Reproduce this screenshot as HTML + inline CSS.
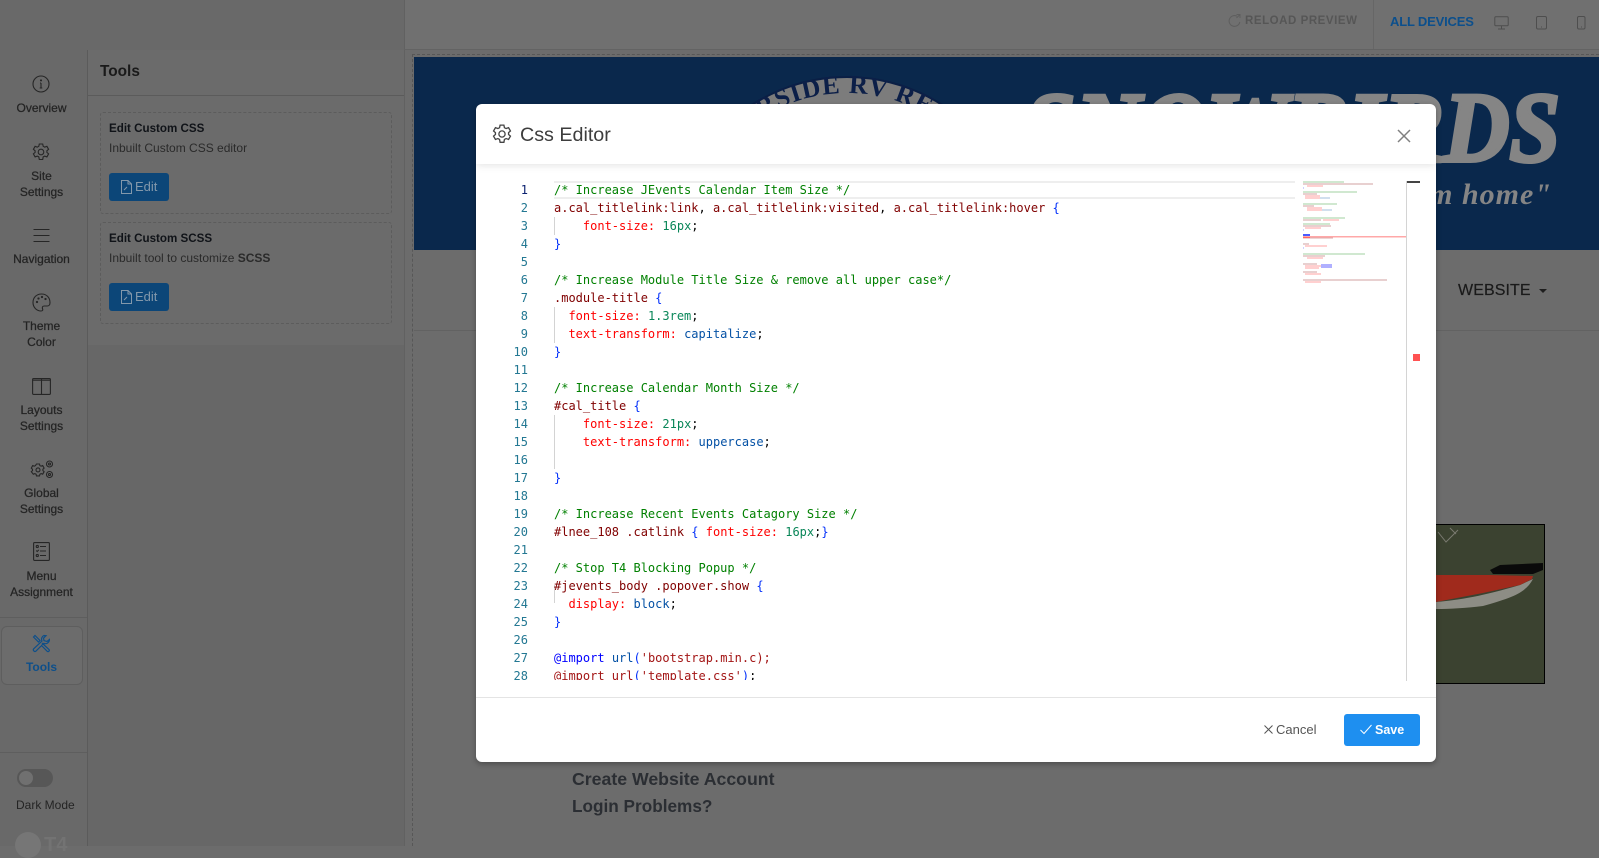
<!DOCTYPE html>
<html><head><meta charset="utf-8">
<style>
*{box-sizing:border-box}
html,body{margin:0;padding:0;width:1599px;height:846px;overflow:hidden;background:#6c6c6c;font-family:"Liberation Sans",sans-serif}
.a{position:absolute}
.nav{position:absolute;left:0;width:83px;text-align:center;font-size:12px;line-height:15.5px;color:#242424;-webkit-text-stroke:.25px #242424}
.ic{position:absolute;fill:none;stroke:#262626;stroke-width:1.1}
.card{position:absolute;left:100px;width:292px;height:102px;border:1px dashed #5c5c5c;border-radius:3px}
.card b.t{position:absolute;left:8px;top:8px;font-size:11.6px;line-height:16px;color:#101318}
.card span.s{position:absolute;left:8px;top:27px;font-size:12px;line-height:16px;color:#2a2a2a;white-space:nowrap}
.btn{position:absolute;left:8px;top:60px;width:60px;height:28px;background:#0c4678;border-radius:3px;color:#8398ab;font-size:13px;line-height:28px;padding-left:26px}
.btn svg{position:absolute;left:12px;top:7px;fill:none;stroke:#8398ab;stroke-width:1}
#code,#nums{position:absolute;font:12px/18px "DejaVu Sans Mono","Liberation Mono",monospace;white-space:pre;margin:0}
#nums{width:38px;text-align:right;color:#237893}
#code{color:#000}
.c{color:#008000}.s{color:#800000}.p{color:#f00}.n{color:#098658}.v{color:#0451a5}.b{color:#0431fa}.q{color:#a31515}.k{color:#00f}
.g{position:absolute;left:554px;width:1px;background:#d3d3d3}
</style></head><body>

<!-- top bar + structure -->
<div class="a" style="left:0;top:0;width:1599px;height:50px;background:#707070"></div>
<div class="a" style="left:0;top:0;width:404px;height:50px;background:#696969"></div>
<div class="a" style="left:0;top:50px;width:88px;height:796px;background:#696969"></div>
<div class="a" style="left:88px;top:50px;width:316px;height:295px;background:#6b6b6b"></div>
<div class="a" style="left:88px;top:345px;width:316px;height:501px;background:#676767"></div>
<div class="a" style="left:404px;top:50px;width:1195px;height:796px;background:#6c6c6c"></div>
<div class="a" style="left:87px;top:50px;width:1px;height:796px;background:#5b5b5b"></div>
<div class="a" style="left:404px;top:0;width:1px;height:846px;background:#616161"></div>
<div class="a" style="left:404px;top:49px;width:1195px;height:1px;background:#636363"></div>
<div class="a" style="left:1373px;top:0;width:1px;height:49px;background:#666"></div>
<div class="a" style="left:412px;top:54px;width:1187px;height:1px;border-top:1px dashed #575757"></div>
<div class="a" style="left:412px;top:54px;width:1px;height:792px;border-left:1px dashed #575757"></div>

<!-- sidebar -->
<svg class="ic" style="left:32px;top:75px" width="18" height="18" viewBox="0 0 18 18"><circle cx="9" cy="9" r="8"/><path d="M9 8v5M7.700 13h2.600M8 8h1" /><circle cx="9" cy="5.400" r=".5"/></svg>
<div class="nav" style="top:101px">Overview</div>
<svg class="ic" style="left:32px;top:143px" width="18" height="18" viewBox="0 0 18 18"><path d="M7.300 1h3.400l.5 2.300 1.500.8 2.200-.8 1.700 3-1.700 1.500v1.600l1.700 1.500-1.700 3-2.200-.8-1.500.8-.5 2.600H7.300l-.5-2.600-1.500-.8-2.200.8-1.700-3 1.700-1.500V7.800L1.400 6.300l1.700-3 2.200.8 1.500-.8z"/><circle cx="9" cy="9" r="2.800"/></svg>
<div class="nav" style="top:169px">Site<br>Settings</div>
<svg class="ic" style="left:33px;top:228px" width="17" height="15" viewBox="0 0 17 15"><path d="M.5 1.500h16M.5 7.500h16M.5 13.500h16"/></svg>
<div class="nav" style="top:252px">Navigation</div>
<svg class="ic" style="left:32px;top:293px" width="19" height="19" viewBox="0 0 19 19"><path d="M9.500 1C4.500 1 1 4.600 1 9.500 1 14.400 4.800 18 9 18c1.600 0 2-1 1.600-2-.6-1.500-.3-3 1.600-3h3c1.600 0 2.800-1.200 2.800-3.300C18 4.500 14.500 1 9.500 1z"/><circle cx="5" cy="9" r=".6"/><circle cx="6.500" cy="5.500" r=".6"/><circle cx="10" cy="4" r=".6"/><circle cx="13.500" cy="6" r=".6"/></svg>
<div class="nav" style="top:319px">Theme<br>Color</div>
<svg class="ic" style="left:32px;top:378px" width="19" height="17" viewBox="0 0 19 17"><rect x=".6" y=".6" width="17.800" height="15.800" rx="1"/><path d="M9.500.6v15.800M.6 2.200h17.800"/></svg>
<div class="nav" style="top:403px">Layouts<br>Settings</div>
<svg class="ic" style="left:30px;top:460px" width="24" height="19" viewBox="0 0 24 19"><path d="M6.500 4h3l.4 1.600 1.200.6 1.600-.6 1.400 2.500-1.200 1.100v1.400l1.200 1.100-1.400 2.500-1.600-.6-1.200.6-.4 1.700h-3l-.4-1.700-1.200-.6-1.600.6L1.300 11.700l1.200-1.100V9.200L1.300 8.100l1.400-2.500 1.600.6 1.200-.6z"/><circle cx="8" cy="9.900" r="2"/><circle cx="19.500" cy="4" r="3"/><circle cx="19.500" cy="4" r="1"/><circle cx="19.500" cy="14.500" r="3"/><circle cx="19.500" cy="14.500" r="1"/></svg>
<div class="nav" style="top:486px">Global<br>Settings</div>
<svg class="ic" style="left:33px;top:542px" width="17" height="19" viewBox="0 0 17 19"><rect x=".6" y=".6" width="15.800" height="17.800" rx="1"/><circle cx="4.300" cy="4.500" r="1.100"/><path d="M7 4.500h6M3.200 8.500l1 1 1.600-1.600M7 9h6M7 13.500h6"/><circle cx="4.300" cy="13.500" r="1.100"/></svg>
<div class="nav" style="top:569px">Menu<br>Assignment</div>
<div class="a" style="left:0;top:617px;width:87px;height:1px;background:#5e5e5e"></div>
<div class="a" style="left:1px;top:626px;width:82px;height:59px;border:1px solid #5e5e5e;border-radius:6px;background:#6c6c6c"></div>
<svg class="ic" style="left:32px;top:634px;stroke:#0e4f8a;stroke-width:1.200" width="19" height="19" viewBox="0 0 19 19"><path d="M1.500 3L3 1.500l5 5-1.500 1.500zM10 9l7 6.500c1 1.200-.6 2.800-1.800 1.800L9 11M12 1.500a4 4 0 0 0-2 5.500L1.700 14.800c-1.200 1.500.8 3.500 2.300 2.300L11.800 9.300a4 4 0 0 0 5.600-3.800L15 7.500l-3-.8-.5-2.500 2.500-2.500z"/></svg>
<div class="nav" style="top:660px;color:#0e4f8a;font-weight:bold;-webkit-text-stroke:0">Tools</div>
<div class="a" style="left:0;top:752px;width:87px;height:1px;background:#5e5e5e"></div>
<div class="a" style="left:17px;top:769px;width:36px;height:18px;border-radius:9px;background:#575757"></div>
<div class="a" style="left:19px;top:771px;width:14px;height:14px;border-radius:7px;background:#707070"></div>
<div class="a" style="left:16px;top:797px;font-size:12px;line-height:16px;color:#242424">Dark Mode</div>
<div class="a" style="left:15px;top:832px;width:26px;height:26px;border-radius:13px;background:#767676"></div>
<div class="a" style="left:44px;top:835px;font-size:20px;line-height:20px;font-weight:bold;color:#737373">T4</div>

<!-- tools panel -->
<div class="a" style="left:100px;top:62px;font-size:15.400px;line-height:19px;font-weight:bold;color:#1a1a1a">Tools</div>
<div class="a" style="left:88px;top:95px;width:316px;height:1px;background:#5b5b5b"></div>
<div class="card" style="top:112px"><b class="t">Edit Custom CSS</b><span class="s">Inbuilt Custom CSS editor</span><div class="btn"><svg width="11" height="14" viewBox="0 0 11 14"><path d="M.5.500h6.500l3.500 3.500v9.500H.5zM7 .5V4h3.500M3 10l3-3"/></svg>Edit</div></div>
<div class="card" style="top:222px"><b class="t">Edit Custom SCSS</b><span class="s">Inbuilt tool to customize <b>SCSS</b></span><div class="btn"><svg width="11" height="14" viewBox="0 0 11 14"><path d="M.5.500h6.500l3.500 3.500v9.500H.5zM7 .5V4h3.500M3 10l3-3"/></svg>Edit</div></div>

<!-- top right -->
<svg class="a" style="left:1228px;top:14px;fill:none;stroke:#5e5e5e;stroke-width:1" width="13" height="13" viewBox="0 0 13 13"><path d="M9 2.200A5.400 5.400 0 1 0 11.800 8M8.500.5h3.500V4M12 .5L8.500 4"/></svg>
<div class="a" style="left:1245px;top:14px;font-size:11.500px;line-height:15px;font-weight:bold;letter-spacing:.55px;color:#565656;white-space:nowrap">RELOAD PREVIEW</div>
<div class="a" style="left:1390px;top:14px;font-size:13px;line-height:16px;font-weight:bold;color:#0c4f8c;white-space:nowrap;letter-spacing:-.18px">ALL DEVICES</div>
<svg class="a" style="left:1494px;top:16px;fill:none;stroke:#4e4e4e;stroke-width:1" width="15" height="14" viewBox="0 0 15 14"><rect x=".8" y=".8" width="13.400" height="9" rx="1"/><path d="M7.500 10v3M4 13h7"/></svg>
<svg class="a" style="left:1536px;top:16px;fill:none;stroke:#4e4e4e;stroke-width:1" width="11" height="14" viewBox="0 0 11 14"><rect x=".5" y=".5" width="10" height="12.500" rx="1.500"/><path d="M5 11h1"/></svg>
<svg class="a" style="left:1577px;top:16px;fill:none;stroke:#4e4e4e;stroke-width:1" width="9" height="14" viewBox="0 0 9 14"><rect x=".5" y=".5" width="7.500" height="12.500" rx="1.500"/><path d="M4 11h1"/></svg>

<!-- banner -->
<div class="a" style="left:414px;top:57px;width:1185px;height:193px;background:#0a284c;overflow:hidden">
 <svg class="a" style="left:0;top:0" width="1185" height="193" viewBox="0 0 1185 193">
  <circle cx="433" cy="196" r="176" fill="#7c7c7c" stroke="#0a1f45" stroke-width="2"/>
  <path id="arc" d="M273 196 A160 160 0 0 1 593 196" fill="none"/>
  <text font-family="'Liberation Serif',serif" font-weight="bold" font-size="26" fill="#0c1f48" letter-spacing="1" text-anchor="middle"><textPath href="#arc" startOffset="50%">RIVERSIDE RV RESORT</textPath></text>
  <text x="611" y="104" textLength="535" lengthAdjust="spacingAndGlyphs" font-family="'Liberation Serif',serif" font-style="italic" font-weight="bold" font-size="100" fill="#858585" stroke="#858585" stroke-width="4">SNOWBIRDS</text>
  <text x="1138" y="147" text-anchor="end" font-family="'Liberation Serif',serif" font-style="italic" font-weight="bold" font-size="30" fill="#858585" letter-spacing="1">from home"</text>
 </svg>
</div>
<div class="a" style="left:1458px;top:281px;font-size:16px;line-height:19px;color:#1a1a1a;letter-spacing:.1px;-webkit-text-stroke:.2px #1a1a1a">WEBSITE</div>
<div class="a" style="left:1539px;top:289px;width:0;height:0;border:4px solid transparent;border-top-color:#1e1e1e;border-bottom:0"></div>
<div class="a" style="left:414px;top:330px;width:1185px;height:1px;background:#626262"></div>

<!-- kayak image -->
<svg class="a" style="left:1400px;top:524px" width="146" height="161" viewBox="0 0 146 161">
 <rect x=".5" y=".5" width="144" height="159" fill="#3b4230" stroke="#000"/>
 <path d="M36 78 C60 76 83 72 120 61 L133 55 C125 70 110 74 83 82 C66 84 50 85 36 85z" fill="#8d8d85"/>
 <path d="M36 51 L90 51 L133 52 L132 55 L120 61 L83 69 L36 78z" fill="#a02a1c"/>
 <path d="M90 46 L100 41 L143 39 L143 46 L133 50 L93 50z" fill="#0a0a0a"/>
 <path d="M38 8l8 10 12-12M50 4l6 6" stroke="#7a7a70" stroke-width="1" fill="none"/>
</svg>

<div class="a" style="left:572px;top:767px;font-size:17.700px;line-height:24px;font-weight:bold;color:#2b2e33;white-space:nowrap">Create Website Account</div>
<div class="a" style="left:572px;top:794px;font-size:17.200px;line-height:24px;font-weight:bold;color:#2b2e33;white-space:nowrap">Login Problems?</div>

<!-- modal -->
<div class="a" style="left:476px;top:104px;width:960px;height:658px;background:#fff;border-radius:6px;box-shadow:0 2px 6px rgba(0,0,0,.3);overflow:hidden">
 <div class="a" style="left:0;top:0;width:960px;height:60px;box-shadow:0 1px 8px rgba(0,0,0,.12)"></div>
</div>
<svg class="a" style="left:492px;top:124px;fill:none;stroke:#444;stroke-width:1.200" width="20" height="20" viewBox="0 0 18 18"><path d="M7.300 1h3.400l.5 2.300 1.500.8 2.200-.8 1.700 3-1.700 1.500v1.600l1.700 1.500-1.700 3-2.200-.8-1.500.8-.5 2.600H7.300l-.5-2.600-1.500-.8-2.200.8-1.700-3 1.700-1.500V7.800L1.400 6.300l1.700-3 2.200.8 1.500-.8z"/><circle cx="9" cy="9" r="2.800"/></svg>
<div class="a" style="left:520px;top:123px;font-size:19.700px;line-height:24px;color:#3d3d3d;white-space:nowrap">Css Editor</div>
<svg class="a" style="left:1397px;top:129px;fill:none;stroke:#808080;stroke-width:1.500" width="14" height="14" viewBox="0 0 14 14"><path d="M1 1l12 12M13 1L1 13"/></svg>

<!-- editor -->
<div class="a" style="left:554px;top:181px;width:741px;height:18px;border-top:2px solid #eee;border-bottom:2px solid #eee"></div>
<div class="g" style="top:217px;height:18px"></div>
<div class="g" style="top:307px;height:36px"></div>
<div class="g" style="top:415px;height:54px"></div>
<div class="g" style="top:585px;height:18px"></div>
<div class="a" style="left:480px;top:181px;width:900px;height:499px;overflow:hidden">
<pre id="nums" style="left:10px;top:0"><span style="color:#0b216f">1</span>
2
3
4
5
6
7
8
9
10
11
12
13
14
15
16
17
18
19
20
21
22
23
24
25
26
27
28</pre>
<pre id="code" style="left:74px;top:0"><span class="c">/* Increase JEvents Calendar Item Size */</span>
<span class="s">a.cal_titlelink:link</span>, <span class="s">a.cal_titlelink:visited</span>, <span class="s">a.cal_titlelink:hover</span> <span class="b">{</span>
    <span class="p">font-size:</span> <span class="n">16px</span>;
<span class="b">}</span>

<span class="c">/* Increase Module Title Size &amp; remove all upper case*/</span>
<span class="s">.module-title</span> <span class="b">{</span>
  <span class="p">font-size:</span> <span class="n">1.3rem</span>;
  <span class="p">text-transform:</span> <span class="v">capitalize</span>;
<span class="b">}</span>

<span class="c">/* Increase Calendar Month Size */</span>
<span class="s">#cal_title</span> <span class="b">{</span>
    <span class="p">font-size:</span> <span class="n">21px</span>;
    <span class="p">text-transform:</span> <span class="v">uppercase</span>;

<span class="b">}</span>

<span class="c">/* Increase Recent Events Catagory Size */</span>
<span class="s">#lnee_108 .catlink</span> <span class="b">{</span> <span class="p">font-size:</span> <span class="n">16px</span>;<span class="b">}</span>

<span class="c">/* Stop T4 Blocking Popup */</span>
<span class="s">#jevents_body .popover.show</span> <span class="b">{</span>
  <span class="p">display:</span> <span class="v">block</span>;
<span class="b">}</span>

<span class="k">@import</span> <span class="v">url</span><span class="b">(</span><span class="q">'bootstrap.min.c</span><span class="q">);</span>
<span class="q">@import url</span><span class="b">(</span><span class="q">'template.css'</span><span class="b">)</span>;</pre>
</div>

<!-- minimap -->
<svg class="a" style="left:1300px;top:178px" width="125" height="120" viewBox="0 0 125 120">
 <g opacity=".36">
 <path d="M3 4h41" stroke="#008000"/><path d="M3 6h70" stroke="#800000"/><path d="M7 8h16" stroke="#f00"/><path d="M3 10h1" stroke="#00f"/>
 <path d="M3 14h54" stroke="#008000"/><path d="M3 16h14" stroke="#800000"/><path d="M5 18h15" stroke="#f00"/><path d="M5 20h15" stroke="#f00"/><path d="M20 20h10" stroke="#0451a5"/>
 <path d="M3 26h34" stroke="#008000"/><path d="M3 28h11" stroke="#800000"/><path d="M7 30h15" stroke="#f00"/><path d="M7 32h15" stroke="#f00"/><path d="M22 32h10" stroke="#0451a5"/>
 <path d="M3 40h42" stroke="#008000"/><path d="M3 42h18" stroke="#800000"/><path d="M23 42h16" stroke="#f00"/>
 <path d="M3 46h27" stroke="#008000"/><path d="M3 48h28" stroke="#800000"/><path d="M5 50h16" stroke="#f00"/><path d="M3 52h1" stroke="#00f"/>
 <path d="M3 60h30" stroke="#a31515"/>
 <path d="M3 66h6" stroke="#800000"/><path d="M5 68h22" stroke="#f00"/><path d="M3 70h1" stroke="#00f"/>
 <path d="M3 76h62" stroke="#008000"/><path d="M3 78h22" stroke="#800000"/><path d="M7 80h16" stroke="#f00"/>
 <path d="M3 86h14" stroke="#800000"/><path d="M5 88h16" stroke="#f00"/><path d="M5 90h14" stroke="#f00"/><path d="M3 94h14" stroke="#800000"/><path d="M5 96h16" stroke="#f00"/>
 <path d="M3 102h84" stroke="#800000"/><path d="M5 104h16" stroke="#f00"/>
 </g>
 <rect x="3" y="56" width="7" height="2" fill="#4a5cff"/><rect x="3" y="58" width="7" height="2" fill="#f22"/>
 <rect x="3" y="58" width="103" height="1.500" fill="#ffa8a8"/>
 <rect x="21" y="86" width="11" height="4" fill="#b0b0ff"/>
</svg>
<div class="a" style="left:1406px;top:181px;width:1px;height:500px;background:#d4d4d4"></div>
<div class="a" style="left:1407px;top:181px;width:13px;height:2px;background:#444"></div>
<div class="a" style="left:1413px;top:354px;width:7px;height:7px;background:#ff5252"></div>

<!-- footer -->
<div class="a" style="left:476px;top:697px;width:960px;height:1px;background:#e4e4e4"></div>
<svg class="a" style="left:1264px;top:725px;fill:none;stroke:#555;stroke-width:1" width="9" height="9" viewBox="0 0 9 9"><path d="M.5.500l8 8M8.500.5l-8 8"/></svg>
<div class="a" style="left:1276px;top:722px;font-size:13px;line-height:16px;color:#555">Cancel</div>
<div class="a" style="left:1344px;top:714px;width:76px;height:32px;background:#1e8ff0;border-radius:3px"></div>
<svg class="a" style="left:1360px;top:724px;fill:none;stroke:#fff;stroke-width:1" width="12" height="11" viewBox="0 0 12 11"><path d="M.5 6l3.500 3.500 7.500-8.500"/></svg>
<div class="a" style="left:1375px;top:722px;font-size:12.500px;line-height:16px;color:#fff;font-weight:bold">Save</div>
</body></html>
